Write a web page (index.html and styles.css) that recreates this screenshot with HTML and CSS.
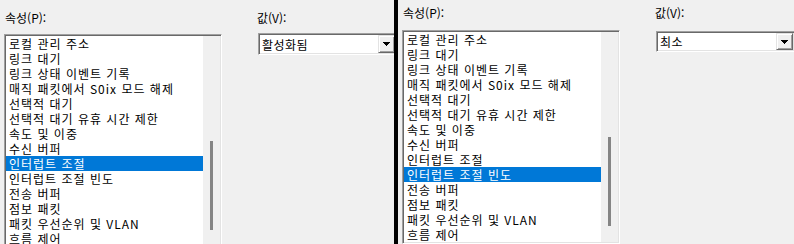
FILE: index.html
```html
<!DOCTYPE html>
<html lang="ko">
<head>
<meta charset="utf-8">
<title>고급 속성</title>
<link rel="stylesheet" href="styles.css">
</head>
<body>
<div class="screen">
  <section class="panel panel--left">
    <div class="field-label field-label--prop">속성(P):</div>
    <div class="field-label field-label--value">값(V):</div>
    <div class="listbox">
      <ul class="listbox__items">
        <li>로컬 관리 주소</li>
        <li>링크 대기</li>
        <li>링크 상태 이벤트 기록</li>
        <li>매직 패킷에서 S0ix 모드 해제</li>
        <li>선택적 대기</li>
        <li>선택적 대기 유휴 시간 제한</li>
        <li>속도 및 이중</li>
        <li>수신 버퍼</li>
        <li class="is-selected">인터럽트 조절</li>
        <li>인터럽트 조절 빈도</li>
        <li>전송 버퍼</li>
        <li>점보 패킷</li>
        <li>패킷 우선순위 및 VLAN</li>
        <li>흐름 제어</li>
      </ul>
      <div class="scrollbar"><div class="scrollbar__thumb"></div></div>
    </div>
    <div class="combo">
      <span class="combo__value">활성화됨</span>
      <span class="combo__button">
        <svg class="combo__arrow" width="7" height="4" viewBox="0 0 7 4" shape-rendering="crispEdges"><rect x="0" y="0" width="7" height="1"/><rect x="1" y="1" width="5" height="1"/><rect x="2" y="2" width="3" height="1"/><rect x="3" y="3" width="1" height="1"/></svg>
      </span>
    </div>
  </section>
  <div class="divider"></div>
  <section class="panel panel--right">
    <div class="field-label field-label--prop">속성(P):</div>
    <div class="field-label field-label--value">값(V):</div>
    <div class="listbox">
      <ul class="listbox__items">
        <li>로컬 관리 주소</li>
        <li>링크 대기</li>
        <li>링크 상태 이벤트 기록</li>
        <li>매직 패킷에서 S0ix 모드 해제</li>
        <li>선택적 대기</li>
        <li>선택적 대기 유휴 시간 제한</li>
        <li>속도 및 이중</li>
        <li>수신 버퍼</li>
        <li>인터럽트 조절</li>
        <li class="is-selected">인터럽트 조절 빈도</li>
        <li>전송 버퍼</li>
        <li>점보 패킷</li>
        <li>패킷 우선순위 및 VLAN</li>
        <li>흐름 제어</li>
      </ul>
      <div class="scrollbar"><div class="scrollbar__thumb"></div></div>
    </div>
    <div class="combo">
      <span class="combo__value">최소</span>
      <span class="combo__button">
        <svg class="combo__arrow" width="7" height="4" viewBox="0 0 7 4" shape-rendering="crispEdges"><rect x="0" y="0" width="7" height="1"/><rect x="1" y="1" width="5" height="1"/><rect x="2" y="2" width="3" height="1"/><rect x="3" y="3" width="1" height="1"/></svg>
      </span>
    </div>
  </section>
</div>
</body>
</html>
```

FILE: styles.css
```css
html, body {
  margin: 0;
  background: #f0f0f0;
}

body {
  font-family: "Noto Sans CJK KR", "Noto Sans", sans-serif;
  font-size: 12px;
  color: #000;
}

.screen {
  display: flex;
  height: 244px;
  overflow: hidden;
}

.panel {
  display: grid;
  grid-template-columns: 218px 139px;
  grid-template-rows: 16px auto;
  column-gap: 36px;
  align-content: start;
  align-items: start;
  padding-left: 4px;
  overflow: hidden;
  box-sizing: border-box;
}

.panel--left {
  width: 394px;
  flex: none;
  padding-top: 10px;
  row-gap: 8px;
}

.panel--right {
  flex: 1;
  padding-top: 5px;
  row-gap: 9px;
}

.divider {
  width: 4px;
  flex: none;
  background: #000;
}

.field-label {
  line-height: 16px;
  white-space: nowrap;
}

.field-label--prop {
  padding-left: 1px;
}

.field-label--value {
  margin-left: -1px;
}

/* sunken 3D frame */
.listbox {
  box-sizing: border-box;
  width: 218px;
  height: 214px;
  border: 1px solid;
  border-color: #a0a0a0 #ffffff #ffffff #a0a0a0;
  padding: 1px;
  box-shadow: inset 1px 1px 0 #696969, inset -1px -1px 0 #e3e3e3;
  display: flex;
}

.listbox__items {
  flex: 1;
  margin: 0;
  padding: 0;
  list-style: none;
  background: #fff;
  overflow: hidden;
}

.listbox__items li {
  height: 15px;
  line-height: 15px;
  padding-left: 3px;
  letter-spacing: 1px;
  white-space: nowrap;
}

.listbox__items li.is-selected {
  background: #0078d7;
  color: #fff;
}

.scrollbar {
  width: 17px;
  flex: none;
  background: #f0f0f0;
  display: flex;
  flex-direction: column;
  padding-top: 105px;
  box-sizing: border-box;
}

.scrollbar__thumb {
  width: 3px;
  height: 89px;
  margin-left: 7px;
  background: #858585;
}

.combo {
  box-sizing: border-box;
  width: 139px;
  height: 22px;
  border: 1px solid;
  border-color: #a0a0a0 #ffffff #ffffff #a0a0a0;
  padding: 1px;
  box-shadow: inset 1px 1px 0 #696969, inset -1px -1px 0 #e3e3e3;
  background: #fff;
  display: flex;
}

.panel--left .combo {
  margin-top: -1px;
}

.panel--right .combo {
  margin-top: 1px;
  height: 21px;
}

.combo__value {
  flex: 1;
  padding-left: 2px;
  display: flex;
  align-items: center;
  letter-spacing: 0.5px;
  white-space: nowrap;
}

.combo__button {
  box-sizing: border-box;
  width: 17px;
  flex: none;
  background: #f0f0f0;
  border: 1px solid;
  border-color: #e3e3e3 #696969 #696969 #e3e3e3;
  box-shadow: inset 1px 1px 0 #ffffff, inset -1px -1px 0 #a0a0a0;
  display: flex;
  align-items: center;
  justify-content: center;
}

.combo__arrow {
  display: block;
  fill: #000;
}
```
